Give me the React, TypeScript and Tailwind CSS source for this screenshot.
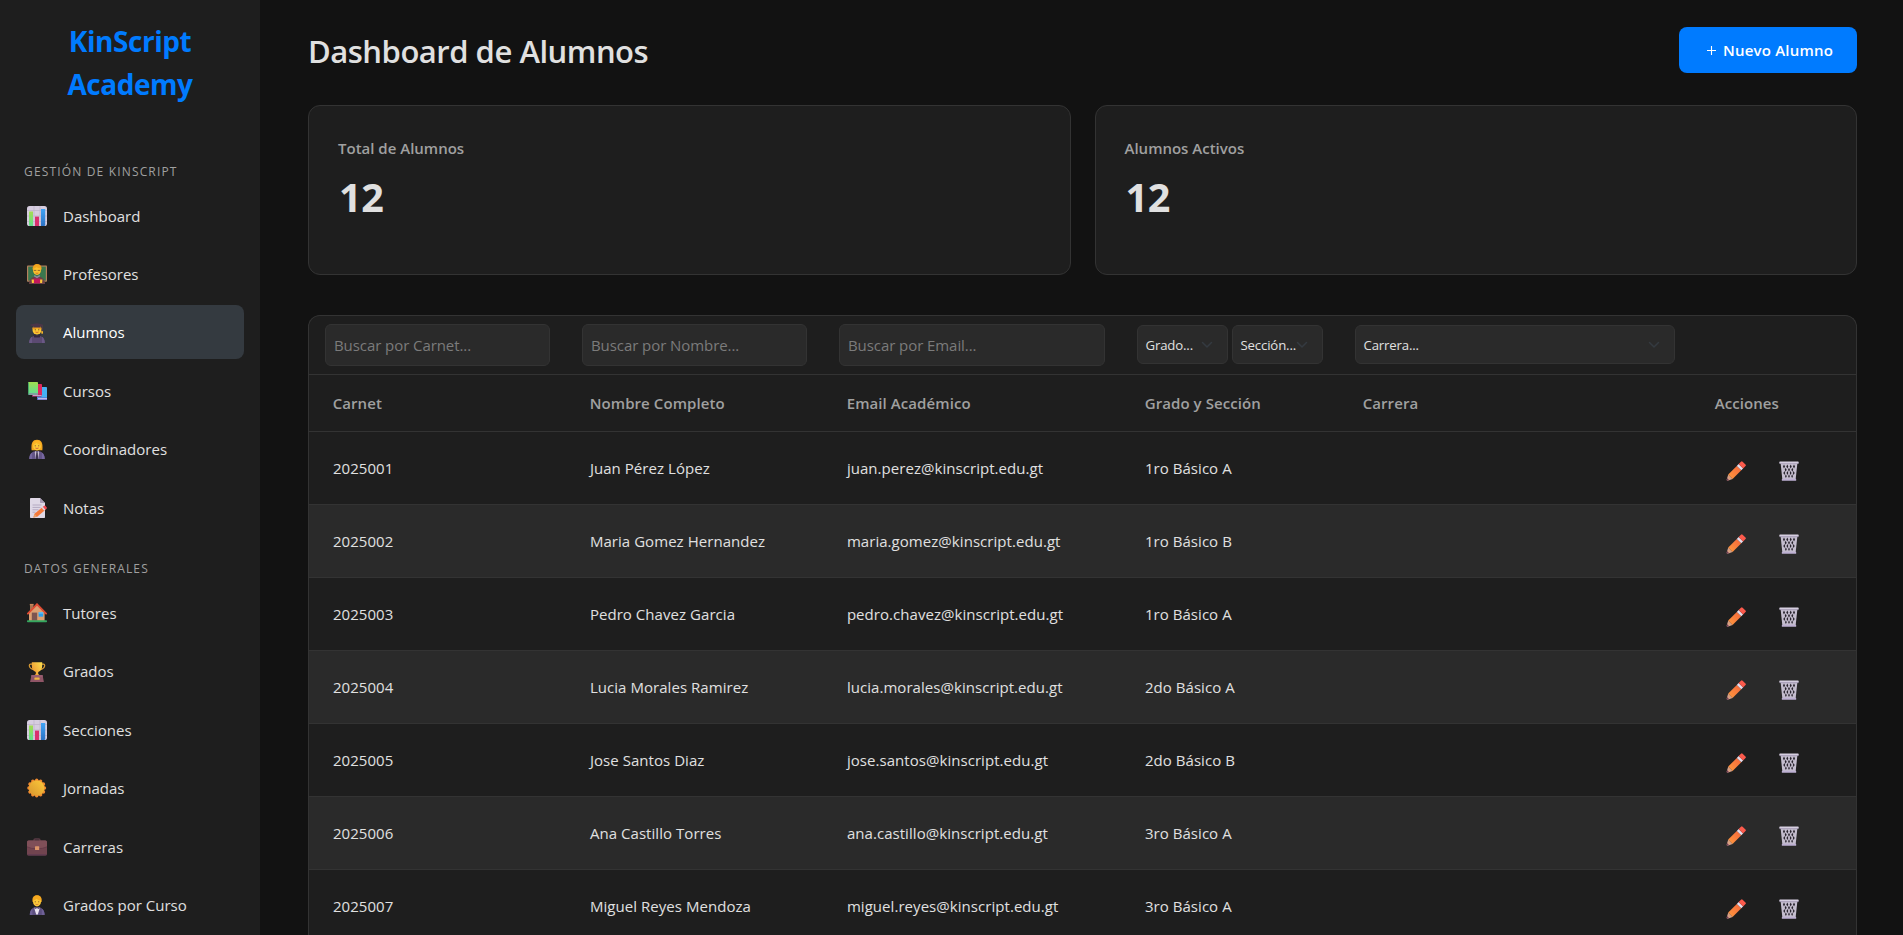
import React from "react";

type IconProps = { className?: string };

const svgProps = { viewBox: "0 0 20 20", width: 20, height: 20, "aria-hidden": true } as const;

function ChartIcon({ className }: IconProps) {
  return (
    <svg {...svgProps} className={className}>
      <defs>
        <linearGradient id="barGreen" x1="0" y1="0" x2="0" y2="1">
          <stop offset="0" stopColor="#a5dc50" />
          <stop offset="1" stopColor="#5fe08c" />
        </linearGradient>
        <linearGradient id="barBlue" x1="0" y1="0" x2="0" y2="1">
          <stop offset="0" stopColor="#3fa4f5" />
          <stop offset="1" stopColor="#2c72c4" />
        </linearGradient>
      </defs>
      <rect width="20" height="20" rx="2.6" fill="#d6cddf" />
      <path d="M7 0v20M13 0v20M0 4.5h20M0 10h20M0 15.5h20" stroke="#bdb2ca" strokeWidth="0.7" />
      <path d="M2 5.4h4V20H3.2L2 19.4z" fill="url(#barGreen)" />
      <rect x="8" y="10.6" width="4" height="9.4" fill="#d9306e" />
      <path d="M14 3h4.2v16.4l-1 .6H14z" fill="url(#barBlue)" />
    </svg>
  );
}

function TeacherIcon({ className }: IconProps) {
  return (
    <svg {...svgProps} className={className}>
      <rect x="0" y="1.5" width="20" height="16.3" rx="0.8" fill="#b4805c" />
      <rect x="1.2" y="2.6" width="17.6" height="14" fill="#3a774e" />
      <path d="M2 20c0-5 3-7.6 8-7.6s8 2.6 8 7.6z" fill="#6b4247" />
      <path d="M5.5 5.6C5.5 2 7.3 0 10.2 0s4.5 2 4.5 5.4z" fill="#e89a1c" />
      <ellipse cx="10" cy="6.3" rx="4" ry="4.6" fill="#fbc02d" />
      <path d="M5.8 4.6C6.5 1.6 8 .4 10 .4s3.8 1 4.2 3.8c-2.4.4-4-.6-5-1.2-.8 1-2 1.5-3.4 1.6z" fill="#f3a61f" />
      <path d="M6.8 6.4h2.5M10.7 6.4h2.5" stroke="#8a5a2c" strokeWidth="0.9" />
      <path d="M8.6 9q1.4.8 2.8 0" stroke="#b7472a" strokeWidth="0.6" fill="none" />
      <path d="M7.2 11.6 10 13.4l2.8-1.8" stroke="#8d8aa0" strokeWidth="1.3" fill="none" />
      <rect x="6.6" y="14.4" width="6.8" height="4.9" rx="0.4" fill="#c2185b" />
      <path d="M4.6 15.6h2.3V19H4.9zM13.1 15.6h2.3l-.3 3.4h-2z" fill="#fbc638" />
    </svg>
  );
}

function StudentIcon({ className }: IconProps) {
  return (
    <svg {...svgProps} className={className}>
      <path d="M2.2 20c0-4.6 2.6-7.6 7.8-7.6s7.8 3 7.8 7.6z" fill="#5b4a72" />
      <path d="M2.2 20c0-3 .9-5 2.8-6.2V20zM17.8 20c0-3-.9-5-2.8-6.2V20z" fill="#6a5886" />
      <ellipse cx="10" cy="6.9" rx="4.5" ry="4.7" fill="#fbc531" />
      <path d="M5.3 6.2C5.6 3.4 7 2.6 10 2.6s4.4 1 4.7 3.6c-2 .2-3.5-.3-4.5-1-1.2.8-2.8 1.2-4.9 1z" fill="#ea9a22" />
      <path d="M6.400 11.200h1.600l2 1.600 2-1.600h1.600l-.8 3.200H7.200z" fill="#33273e" />
      <path d="m3.3 1.5 6.7-1.3 5.7 1.3v1.2l-2 .6V4.400H6.200V3.200L3.300 2.600z" fill="#4a3548" />
      <path d="M15.2 2.4v5.8" stroke="#5b3e4c" strokeWidth="0.8" />
      <rect x="14.3" y="8" width="1.7" height="2.7" rx="0.4" fill="#f5b52b" />
      <path d="M7.8 6.8h.9M11.3 6.8h.9" stroke="#4a2f2c" strokeWidth="1" />
      <path d="M8.4 9q1.6 1 3.2 0" stroke="#bd502d" strokeWidth="0.7" fill="none" />
    </svg>
  );
}

function BooksIcon({ className }: IconProps) {
  return (
    <svg {...svgProps} className={className}>
      <defs>
        <linearGradient id="bookGreen" x1="0" y1="0" x2="0" y2="1">
          <stop offset="0" stopColor="#a0df4f" />
          <stop offset="1" stopColor="#63dd92" />
        </linearGradient>
      </defs>
      <rect x="10" y="6" width="10" height="12.5" rx="0.4" fill="#46b1f2" />
      <path d="M10 16.5h10V19H10z" fill="#5a63c8" />
      <path d="M11 17.2h9v1.1h-9z" fill="#d9d2ee" />
      <rect x="5" y="3" width="10" height="11.5" rx="0.4" fill="#e0285c" />
      <path d="M5 13.5h9.500v2.200H5z" fill="#9d3472" />
      <path d="M6 14.1h8.500v.9H6z" fill="#d6a6cd" />
      <rect x="1" y="1" width="10" height="11.6" rx="0.4" fill="url(#bookGreen)" />
      <path d="M1 12h10v2H1z" fill="#47866f" />
      <path d="M2 12.500h9v1H2z" fill="#b6bdd0" />
      <path d="M1 1.500h1V13H1z" fill="#49a86b" />
    </svg>
  );
}

function OfficeWomanIcon({ className }: IconProps) {
  return (
    <svg {...svgProps} className={className}>
      <path d="M4.6 11.2C3.9 4 5.5.8 10 .8S16 4 15.4 11.200z" fill="#f2a51f" />
      <path d="M2.300 20c0-5 2.500-8 7.700-8s7.700 3 7.700 8z" fill="#645588" />
      <path d="M2.300 20c0-3 .9-5 2.800-6.200V20zM17.700 20c0-3-.9-5-2.800-6.200V20z" fill="#7667a0" />
      <ellipse cx="10" cy="6.9" rx="3.9" ry="4.5" fill="#fdc938" />
      <path d="M5.500 6.200C6 2.800 7.500 1.400 10 1.400s4 1.400 4.500 4.800C12 6 10.500 5 9.400 3.800 8.500 5 7.200 5.900 5.500 6.200z" fill="#fbb324" />
      <path d="M8.200 12 10 13.500l1.800-1.500.4 1.500L11.200 20H8.800L7.800 13.500z" fill="#c9bfd4" />
      <path d="M9.300 13.300h1.400l.5 6.700H8.800z" fill="#3d3450" />
      <path d="M7.800 6.800h.9M11.300 6.800h.9" stroke="#5a3a2c" strokeWidth="0.9" />
      <path d="M8.400 9q1.600 1 3.200 0" stroke="#c44f38" strokeWidth="0.8" fill="none" />
    </svg>
  );
}

function MemoIcon({ className }: IconProps) {
  return (
    <svg {...svgProps} className={className}>
      <path d="M3 .7Q3 0 3.700 0H13l5 5v14.300q0 .7-.7.700H3.700q-.7 0-.7-.700z" fill="#dfd8e6" />
      <path d="M13 0v4.300q0 .7.700.700H18z" fill="#a79bb4" />
      <path d="M5.500 7h9M5.500 9.400h8M5.500 11.800h6M5.500 14.200h3" stroke="#b5aac2" strokeWidth="1" />
      <path d="m7.500 15.800 8.400-7 2.600 3-8.300 6.900-3.800.8z" fill="#f5793a" />
      <path d="m14.600 9.800 1.300-1 2.600 3-1.300 1z" fill="#e3d5e3" />
      <path d="m15.900 8.800 1.400-1.100q.6-.4 1.100.100l1.400 1.700q.4.600-.1 1.100l-1.200 1.200z" fill="#ef4a55" />
      <path d="m7.500 15.800 2.700 2.900-3.800.8z" fill="#e8a06c" />
    </svg>
  );
}

function HouseIcon({ className }: IconProps) {
  return (
    <svg {...svgProps} className={className}>
      <path d="M3 1.600h3.400V9H3z" fill="#a97350" />
      <path d="M2.800.9h3.800v1.400H2.800z" fill="#c8875b" />
      <path d="m10 1.500 7.600 7.700V18H2V9.200z" fill="#dda072" />
      <path d="M.9 10.600 10 1.300l9.100 9.300" fill="none" stroke="#e04b33" strokeWidth="1.9" strokeLinecap="round" />
      <rect x="4.8" y="9.6" width="5.4" height="8" fill="#7d5450" />
      <rect x="11.6" y="9.3" width="4.6" height="4.4" fill="#2f9eea" />
      <path d="M11.600 9.300h4.600v1.300h-4.600z" fill="#69c3f5" />
      <rect y="17.3" width="20" height="2" rx="0.8" fill="#35a75f" />
    </svg>
  );
}

function TrophyIcon({ className }: IconProps) {
  return (
    <svg {...svgProps} className={className}>
      <defs>
        <linearGradient id="cupGold" x1="1" y1="0" x2="0" y2="0.6">
          <stop offset="0" stopColor="#fbe04f" />
          <stop offset="1" stopColor="#ef9a33" />
        </linearGradient>
      </defs>
      <path d="M5 2.200H3.600Q2 2.200 2.400 4.200 3 7 7 7.600M15 2.200h1.400q1.600 0 1.200 2Q17 7 13 7.600" fill="none" stroke="#d79a34" strokeWidth="1.2" />
      <path d="M4.800.2h10.400v3.400q0 5.200-4 6.300v2l1.400 1.300H7.400l1.400-1.300v-2q-4-1.100-4-6.300z" fill="url(#cupGold)" />
      <path d="M4.400 13.200h11.200l1.300 6.800H3.100z" fill="#8f5566" />
      <path d="M4.400 13.200h11.200l.3 1.300H4.100z" fill="#a3667a" />
      <rect x="7.4" y="15.6" width="5.2" height="2.1" rx="0.5" fill="#f0b545" />
    </svg>
  );
}

function SunIcon({ className }: IconProps) {
  const rays = [0, 30, 60, 90, 120, 150, 180, 210, 240, 270, 300, 330];
  return (
    <svg {...svgProps} className={className}>
      <defs>
        <linearGradient id="sunFace" x1="1" y1="0" x2="0" y2="1">
          <stop offset="0" stopColor="#fcc93a" />
          <stop offset="1" stopColor="#d8962e" />
        </linearGradient>
      </defs>
      {rays.map((a) => (
        <circle key={a} cx="9.7" cy="2.2" r="1.7" fill="#f08a2e" transform={`rotate(${a} 9.7 10)`} />
      ))}
      <circle cx="9.7" cy="10" r="8.1" fill="#f0922e" />
      <circle cx="9.7" cy="10" r="7.6" fill="url(#sunFace)" />
    </svg>
  );
}

function BriefcaseIcon({ className }: IconProps) {
  return (
    <svg {...svgProps} className={className}>
      <path d="M7 4V3.200Q7 2 8.200 2h3.600Q13 2 13 3.200V4" fill="none" stroke="#5a3b45" strokeWidth="1.3" />
      <rect y="3.6" width="20" height="15" rx="1.6" fill="#71444f" />
      <path d="M0 5.200q0-1.600 1.600-1.600h16.800q1.600 0 1.600 1.600v4.600q-4 2-10 2t-10-2z" fill="#7f4f58" />
      <path d="M0 9.800q4 2 10 2t10-2" fill="none" stroke="#5e3745" strokeWidth="0.7" />
      <path d="M.3 17.300h19.400q-.4 1.300-1.700 1.300H2q-1.300 0-1.700-1.300z" fill="#5f3a50" />
      <rect x="8" y="9.2" width="4.2" height="3.7" rx="0.5" fill="#dc9468" />
    </svg>
  );
}

function TuxedoIcon({ className }: IconProps) {
  return (
    <svg {...svgProps} className={className}>
      <path d="M2.800 20c0-5 2.300-8 7.200-8s7.600 3 7.600 8z" fill="#5d5080" />
      <path d="M2.800 20c0-3 .9-5 2.600-6.200V20zM17.600 20c0-3-.9-5-2.800-6.200V20z" fill="#6e6096" />
      <path d="M5.600 7C4.800 2.600 6.500.3 10 .3c3.600 0 5.200 2.300 4.600 6.700z" fill="#eda01e" />
      <ellipse cx="10" cy="6.8" rx="4" ry="4.6" fill="#fdc938" />
      <path d="M5.800 5.400C6.300 2 7.800.6 10 .6c2.400 0 4 1.400 4.300 4.600-2.300.2-4-.5-5-1.500-.8 1-2 1.600-3.500 1.700z" fill="#f6aa20" />
      <path d="M7.900 12 10 13.500l2.100-1.500.4 2-1.700 5.500H9.200l-1.700-5.500z" fill="#eae3f0" />
      <path d="m7.900 11.900 2.100 1 2.100-1v2.200l-2.100-1-2.100 1z" fill="#40345a" />
      <path d="M7.800 6.800h.9M11.300 6.800h.9" stroke="#5a3a2c" strokeWidth="0.9" />
      <path d="M8.500 9.200q1.500.8 3 0" stroke="#c46a38" strokeWidth="0.7" fill="none" />
    </svg>
  );
}

function PencilIcon({ className }: IconProps) {
  return (
    <svg {...svgProps} className={className}>
      <defs>
        <linearGradient id="pencilBody" x1="1" y1="0" x2="0" y2="1">
          <stop offset="0" stopColor="#f4653c" />
          <stop offset="1" stopColor="#ff9a3d" />
        </linearGradient>
      </defs>
      <path d="M2.200 13.600 10.800 4.900l4.500 4.400-8.700 8.800z" fill="url(#pencilBody)" />
      <path d="m10.800 4.900 1.800-1.800 4.500 4.400-1.800 1.800z" fill="#e6dcea" />
      <path d="M12.600 3.100 15 .700q.8-.8 1.600 0l2.900 2.800q.8.800 0 1.600l-2.400 2.400z" fill="#fb5a4c" />
      <path d="m2.200 13.600 4.400 4.500-4.200 1.400q-2 .7-1.600-1.300z" fill="#d9a083" />
      <path d="m1.100 17 2 2.200-.9.400Q.4 20 .6 18.600z" fill="#6d3f57" />
    </svg>
  );
}

function TrashIcon({ className }: IconProps) {
  return (
    <svg {...svgProps} className={className}>
      <path d="M1.600 2h16.800L16.600 19H3.400z" fill="#c4bdce" />
      <g fill="#25212a">
        <path d="m5 3.600 1 2-1 2-1-2zM8.300 3.600l1 2-1 2-1-2zM11.700 3.600l1 2-1 2-1-2zM15 3.600l1 2-1 2-1-2z" />
        <path d="m6.700 6.800.95 2-.95 2-.95-2zM10 6.800l.95 2-.95 2-.95-2zM13.300 6.800l.95 2-.95 2-.95-2z" />
        <path d="m5.300 10 .9 2-.9 2-.9-2zM8.400 10l.9 2-.9 2-.9-2zM11.600 10l.9 2-.9 2-.9-2zM14.700 10l.9 2-.9 2-.9-2z" />
        <path d="m6.900 13.300.85 1.900-.85 1.900-.85-1.900zM10 13.300l.85 1.900-.85 1.900-.85-1.900zM13.100 13.300l.85 1.900-.85 1.900-.85-1.900z" />
      </g>
      <rect x="0.3" y="0.6" width="19.4" height="2.2" rx="0.7" fill="#d5cee0" />
      <path d="M.6 2.400h18.800v.7H.6z" fill="#978aa8" />
      <rect x="2.8" y="17.8" width="14.4" height="2" rx="0.6" fill="#bdb0d2" />
    </svg>
  );
}

type NavEntry = { label: string; Icon: React.FC<IconProps>; active?: boolean };

const managementNav: NavEntry[] = [
  { label: "Dashboard", Icon: ChartIcon },
  { label: "Profesores", Icon: TeacherIcon },
  { label: "Alumnos", Icon: StudentIcon, active: true },
  { label: "Cursos", Icon: BooksIcon },
  { label: "Coordinadores", Icon: OfficeWomanIcon },
  { label: "Notas", Icon: MemoIcon },
];

const generalNav: NavEntry[] = [
  { label: "Tutores", Icon: HouseIcon },
  { label: "Grados", Icon: TrophyIcon },
  { label: "Secciones", Icon: ChartIcon },
  { label: "Jornadas", Icon: SunIcon },
  { label: "Carreras", Icon: BriefcaseIcon },
  { label: "Grados por Curso", Icon: TuxedoIcon },
];

const students = [
  { id: "2025001", name: "Juan Pérez López", email: "juan.perez@kinscript.edu.gt", grade: "1ro Básico A" },
  { id: "2025002", name: "Maria Gomez Hernandez", email: "maria.gomez@kinscript.edu.gt", grade: "1ro Básico B" },
  { id: "2025003", name: "Pedro Chavez Garcia", email: "pedro.chavez@kinscript.edu.gt", grade: "1ro Básico A" },
  { id: "2025004", name: "Lucia Morales Ramirez", email: "lucia.morales@kinscript.edu.gt", grade: "2do Básico A" },
  { id: "2025005", name: "Jose Santos Diaz", email: "jose.santos@kinscript.edu.gt", grade: "2do Básico B" },
  { id: "2025006", name: "Ana Castillo Torres", email: "ana.castillo@kinscript.edu.gt", grade: "3ro Básico A" },
  { id: "2025007", name: "Miguel Reyes Mendoza", email: "miguel.reyes@kinscript.edu.gt", grade: "3ro Básico A" },
];

function NavSection({ title, entries }: { title: string; entries: NavEntry[] }) {
  return (
    <div>
      <h3 className="pl-2 text-[12px] leading-5 tracking-[1.16px] text-[#a0a0a0] uppercase">{title}</h3>
      <ul className="mt-[6.2px] flex flex-col gap-1">
        {entries.map(({ label, Icon, active }) => (
          <li key={label}>
            <a
              href="#"
              className={`flex h-[54.4px] items-center gap-4 rounded-lg pl-[11px] ${
                active ? "bg-[#343a40] text-white" : "text-[#e0e0e0]"
              }`}
            >
              <Icon className="mt-px" />
              <span className="pt-px">{label}</span>
            </a>
          </li>
        ))}
      </ul>
    </div>
  );
}

function StatCard({ title, value }: { title: string; value: number }) {
  return (
    <div className="h-[170px] flex-1 rounded-xl border border-[#333] bg-[#1e1e1e] px-[29px] pt-[30px]">
      <h3 className="leading-6 font-semibold text-[#a0a0a0]">{title}</h3>
      <p className="mt-[11px] pl-px text-[39.5px] leading-[52px] font-bold tracking-[-0.4px] text-[#e0e0e0]">{value}</p>
    </div>
  );
}

function SearchInput({ placeholder }: { placeholder: string }) {
  return (
    <input
      type="text"
      placeholder={placeholder}
      className="block h-[42px] w-full rounded-md border border-[#333] bg-[#2a2a2a] px-2 tracking-[-0.07px] text-[#e0e0e0] placeholder:text-[#7b7b7b]"
    />
  );
}

function FilterSelect({ label }: { label: string }) {
  return (
    <button
      type="button"
      className="mb-px flex h-[39px] min-w-0 flex-1 items-center justify-between rounded-md border border-[#333] bg-[#2a2a2a] pr-[14px] pl-[7.5px] text-[13.2px] tracking-[-0.15px] text-[#e0e0e0]"
    >
      <span className="-mr-2 pt-[2px] whitespace-nowrap">{label}</span>
      <svg viewBox="0 0 12 8" width="12" height="8" className="shrink-0" aria-hidden="true">
        <path d="m1.500 1.500 4.500 4.500 4.500-4.500" fill="none" stroke="#343a40" strokeWidth="1.5" strokeLinecap="round" strokeLinejoin="round" />
      </svg>
    </button>
  );
}

export default function App() {
  return (
    <div className="flex h-screen overflow-hidden bg-[#121212] font-['Open_Sans','Noto_Sans',sans-serif] text-[15px] text-[#e0e0e0]">
      <aside className="h-full w-[260px] shrink-0 overflow-hidden bg-[#1e1e1e] px-4 pt-5">
        <h2 className="px-8 text-center text-[28px] leading-[43px] font-bold tracking-[-0.45px] text-[#007bff]">
          KinScript Academy
        </h2>
        <nav className="mt-[56px] flex flex-col gap-[24.8px]">
          <NavSection title="Gestión de KinScript" entries={managementNav} />
          <NavSection title="Datos Generales" entries={generalNav} />
        </nav>
      </aside>

      <main className="flex-1 pt-[27px] pr-[46px] pl-12">
        <header className="flex h-[46px] items-center justify-between">
          <h1 className="pt-px text-[31px] leading-[42px] font-semibold tracking-[-0.48px]">Dashboard de Alumnos</h1>
          <button
            type="button"
            className="flex h-[46px] w-[178px] items-center gap-2 rounded-lg bg-[#007bff] pl-[28px] text-white"
          >
            <svg viewBox="0 0 9 9" width="9" height="9" className="shrink-0" aria-hidden="true">
              <path d="M4.500 0v9M0 4.500h9" stroke="#fff" strokeWidth="1.1" />
            </svg>
            <span className="-ml-px font-semibold tracking-[0.2px]">Nuevo Alumno</span>
          </button>
        </header>

        <section className="mt-8 flex gap-6">
          <StatCard title="Total de Alumnos" value={12} />
          <StatCard title="Alumnos Activos" value={12} />
        </section>

        <section className="mt-10 overflow-hidden rounded-t-xl border border-b-0 border-[#333] bg-[#1e1e1e]">
          <table className="w-full table-fixed border-separate border-spacing-0">
            <colgroup>
              <col className="w-[257px]" />
              <col className="w-[257px]" />
              <col className="w-[298px]" />
              <col className="w-[218px]" />
              <col className="w-[352px]" />
              <col className="w-[165px]" />
            </colgroup>
            <thead>
              <tr className="[&>th]:h-[59px] [&>th]:border-b [&>th]:border-[#333] [&>th]:px-4 [&>th]:py-0 [&>th]:text-left [&>th]:font-normal">
                <th><SearchInput placeholder="Buscar por Carnet..." /></th>
                <th><SearchInput placeholder="Buscar por Nombre..." /></th>
                <th><SearchInput placeholder="Buscar por Email..." /></th>
                <th>
                  <div className="flex gap-1">
                    <FilterSelect label="Grado..." />
                    <FilterSelect label="Sección..." />
                  </div>
                </th>
                <th>
                  <div className="flex">
                    <FilterSelect label="Carrera..." />
                  </div>
                </th>
                <th />
              </tr>
              <tr className="text-left text-[#a0a0a0] [&>th]:h-[57px] [&>th]:border-b [&>th]:border-[#333] [&>th]:py-0 [&>th]:pl-[23.7px] [&>th]:font-semibold [&>th]:tracking-[0.08px]">
                <th>Carnet</th>
                <th>Nombre Completo</th>
                <th>Email Académico</th>
                <th>Grado y Sección</th>
                <th>Carrera</th>
                <th>Acciones</th>
              </tr>
            </thead>
            <tbody>
              {students.map((s) => (
                <tr
                  key={s.id}
                  className="even:bg-[#2a2a2a] [&>td]:h-[73px] [&>td]:border-b [&>td]:border-[#333] [&>td]:py-0 [&>td]:pl-[23.9px] [&>td]:tracking-[0.05px] [&>td]:whitespace-nowrap"
                >
                  <td>{s.id}</td>
                  <td>{s.name}</td>
                  <td>{s.email}</td>
                  <td>{s.grade}</td>
                  <td />
                  <td>
                    <div className="flex gap-[33px] pt-[6px] pl-[11px]">
                      <button type="button" aria-label="Editar"><PencilIcon className="block" /></button>
                      <button type="button" aria-label="Eliminar"><TrashIcon className="block" /></button>
                    </div>
                  </td>
                </tr>
              ))}
            </tbody>
          </table>
        </section>
      </main>
    </div>
  );
}
